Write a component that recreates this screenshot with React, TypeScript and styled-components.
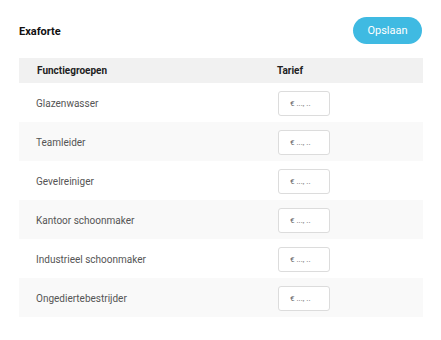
import styled, { createGlobalStyle } from "styled-components";

const GlobalStyle = createGlobalStyle`
  body {
    margin: 0;
    background: #ffffff;
    font-family: Roboto, "Liberation Sans", sans-serif;
  }
`;

const Page = styled.div`
  padding: 17px 18px 0 18px;
`;

const Toolbar = styled.div`
  display: flex;
  align-items: center;
  justify-content: space-between;
  height: 27px;
  margin-bottom: 14px;
`;

const Title = styled.h1`
  margin: 0 0 0 1px;
  padding-top: 2px;
  font-size: 11px;
  font-weight: 700;
  color: #111;
`;

const SaveButton = styled.button`
  height: 27px;
  width: 69px;
  margin-right: 1px;
  border: none;
  border-radius: 14px;
  background: #3fbae2;
  color: #ffffff;
  font-family: inherit;
  font-size: 11px;
  cursor: pointer;
`;

const Table = styled.div`
  margin-left: 1px;
`;

const Row = styled.div<{ $variant: "head" | "odd" | "even" }>`
  display: grid;
  grid-template-columns: 258px 1fr;
  align-items: center;
  height: ${(p) => (p.$variant === "head" ? "25px" : "39px")};
  background: ${(p) =>
    p.$variant === "head" ? "#f1f1f1" : p.$variant === "even" ? "#f9f9f9" : "#ffffff"};
`;

const HeadCell = styled.div`
  font-size: 10px;
  font-weight: 700;
  color: #222;
  &:first-child {
    padding-left: 18px;
  }
`;

const NameCell = styled.div`
  padding: 2px 0 0 17px;
  font-size: 10px;
  color: #555;
`;

const PriceInput = styled.input`
  box-sizing: border-box;
  width: 52px;
  height: 25px;
  margin: 1px 0 0 1px;
  padding: 0 0 0 11px;
  border: 1px solid #dcdcdc;
  border-radius: 3px;
  background: #ffffff;
  font-family: inherit;
  font-size: 8px;
  outline: none;
  &::placeholder {
    color: #666;
  }
`;

const groups = [
  "Glazenwasser",
  "Teamleider",
  "Gevelreiniger",
  "Kantoor schoonmaker",
  "Industrieel schoonmaker",
  "Ongediertebestrijder",
];

export default function App() {
  return (
    <>
      <GlobalStyle />
      <Page>
        <Toolbar>
          <Title>Exaforte</Title>
          <SaveButton>Opslaan</SaveButton>
        </Toolbar>
        <Table>
          <Row $variant="head">
            <HeadCell>Functiegroepen</HeadCell>
            <HeadCell>Tarief</HeadCell>
          </Row>
          {groups.map((name, i) => (
            <Row key={name} $variant={i % 2 === 0 ? "odd" : "even"}>
              <NameCell>{name}</NameCell>
              <div>
                <PriceInput placeholder="€ ..., .." />
              </div>
            </Row>
          ))}
        </Table>
      </Page>
    </>
  );
}
